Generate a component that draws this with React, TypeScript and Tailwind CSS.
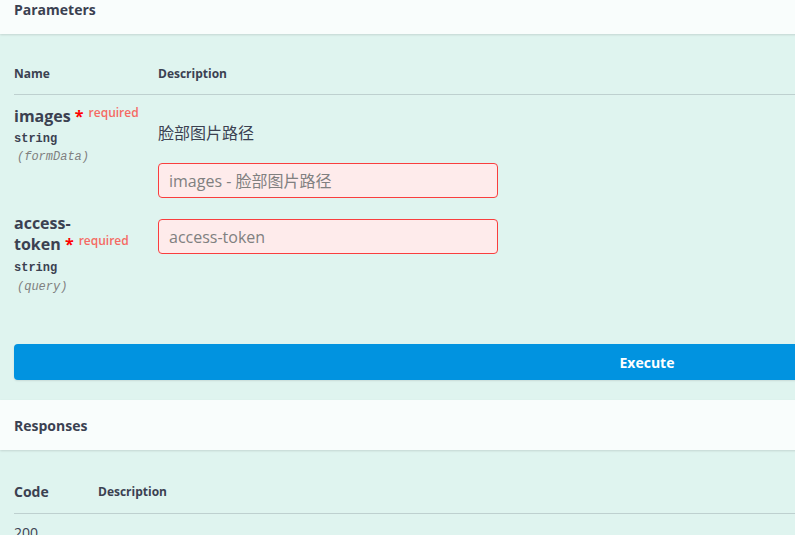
import React from 'react';

const sans = 'font-["Open_Sans","Noto_Sans_CJK_SC",sans-serif]';
const mono = 'font-["Liberation_Mono","Noto_Sans_CJK_SC",monospace]';

const Required: React.FC = () => (
  <>
    <span className="text-[#ff0000]">&nbsp;*</span>
    <span className="relative -top-[5px] pl-[5px] text-[12px] font-semibold text-[#f56a63]">required</span>
  </>
);

const App: React.FC = () => {
  return (
    <div className={`w-[795px] h-[535px] overflow-hidden bg-[#dff4ef] text-[#3b4151] ${sans}`}>
      <div className="w-[1294px]">
        <div className="h-[34px] bg-[#f9fdfc] shadow-[0_1px_2px_rgba(0,0,0,0.12)] px-[14px]">
          <h4 className="text-[14px] font-bold leading-[20px]">Parameters</h4>
        </div>

        <div className="px-[14px] pt-[30px]">
          <div className="flex text-[12px] font-bold leading-[20px] pb-[10px] border-b border-[#3b4151]/20">
            <div className="w-[144px]">Name</div>
            <div>Description</div>
          </div>

          <div className="flex pt-[11px]">
            <div className="w-[144px]">
              <div className="text-[16px] font-bold leading-[21px]">
                images<Required />
              </div>
              <div className={`mt-[2px] text-[12px] font-bold leading-[18px] ${mono}`}>string</div>
              <div className={`pl-[3px] text-[12px] italic leading-[19px] text-[#808080] ${mono}`}>(formData)</div>
            </div>
            <div>
              <p className="mt-[15px] text-[16px] leading-[24px]">脸部图片路径</p>
              <input
                placeholder="images - 脸部图片路径"
                className="mt-[18px] block w-[340px] h-[35px] rounded-[4px] border border-[#f93e3e] bg-[#feebeb] px-[10px] text-[16px] outline-none placeholder:text-[#808080]"
              />
            </div>
          </div>

          <div className="flex pt-[15px]">
            <div className="w-[144px]">
              <div className="w-[120px] text-[16px] font-bold leading-[21px]">
                access-token<Required />
              </div>
              <div className={`mt-[3px] text-[12px] font-bold leading-[18px] ${mono}`}>string</div>
              <div className={`pl-[3px] text-[12px] italic leading-[20px] text-[#808080] ${mono}`}>(query)</div>
            </div>
            <div>
              <input
                placeholder="access-token"
                className="mt-[6px] block w-[340px] h-[35px] rounded-[4px] border border-[#f93e3e] bg-[#feebeb] px-[10px] text-[16px] outline-none placeholder:text-[#808080]"
              />
            </div>
          </div>

          <div className="pt-[47px] pb-[20px]">
            <button className="w-full h-[36px] rounded-[4px] bg-[#0193e0] text-white text-[14px] font-bold shadow-[0_1px_2px_rgba(0,0,0,0.1)]">
              Execute
            </button>
          </div>
        </div>

        <div className="h-[50px] bg-[#f9fdfc] shadow-[0_1px_2px_rgba(0,0,0,0.12)] px-[14px] flex items-center">
          <h4 className="text-[14px] font-bold leading-[20px] pt-[2px]">Responses</h4>
        </div>

        <div className="px-[14px] pt-[32px]">
          <div className="flex items-center leading-[20px] pb-[11px] border-b border-[#3b4151]/20">
            <div className="w-[84px] text-[14px] font-bold">Code</div>
            <div className="text-[12px] font-bold">Description</div>
          </div>
          <div className="pt-[9px] text-[14px] leading-[20px]">200</div>
        </div>
      </div>
    </div>
  );
};

export default App;
